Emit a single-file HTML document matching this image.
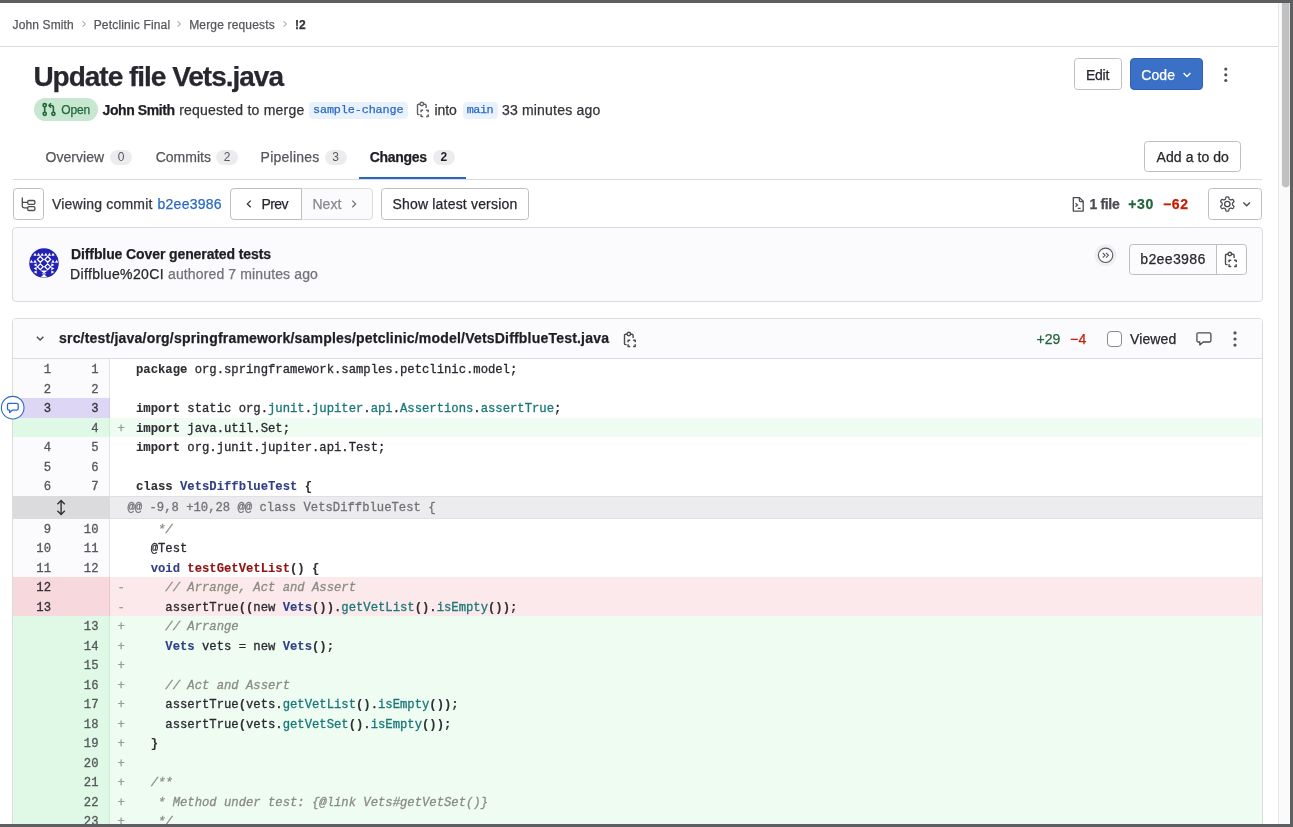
<!DOCTYPE html>
<html lang="en">
<head>
<meta charset="utf-8">
<title>Update file Vets.java (!2) · Merge requests · John Smith / Petclinic Final · GitLab</title>
<style>
*{box-sizing:border-box;margin:0;padding:0}
html,body{width:1293px;height:827px;overflow:hidden;background:#fff}
body{position:relative;font-family:"Liberation Sans",sans-serif;font-size:14px;color:#333238;-webkit-font-smoothing:antialiased}
.abs{position:absolute}
.t{position:absolute;white-space:pre;line-height:1;-webkit-text-stroke:0.250px currentColor}
.mono{font-family:"Liberation Mono",monospace}
.b{font-weight:700}
.hline{position:absolute;height:1px;background:#dcdcde}
.btn{position:absolute;border:1px solid #bfbfc3;border-radius:3.500px;background:#fff}
/* frame */
#ftop{left:0;top:0;width:1293px;height:3px;background:#5e5f61}
#fright{left:1289.5px;top:0;width:3.5px;height:827px;background:#5e5f61}
#fbot{left:0;top:824px;width:1293px;height:3px;background:#5e5f61}
#strack{left:1278px;top:3px;width:11.5px;height:821px;background:#fafafa;border-left:1px solid #e8e8e8}
/* breadcrumb */
.bc{font-size:12px;color:#57565c}
/* tabs */
.tab{font-size:14px;color:#57565c}
.pill{position:absolute;height:15px;border-radius:8px;background:#ececef}
.pill span{position:absolute;left:0;right:0;top:1.500px;text-align:center;font-size:12px;line-height:1;color:#57565c}
/* diff */
#diff{left:13px;top:359px;width:1249px;height:470px;overflow:hidden}
.row{position:absolute;left:0;width:1249px;height:19.5px}
.row .ln{position:absolute;left:0;top:0;width:96.5px;height:100%;background:#fbfafd;border-right:1px solid #e4e4e8}
.row .n1,.row .n2,.row .sg,.row .cd{-webkit-text-stroke:0.300px currentColor;position:absolute;top:5px;font-family:"Liberation Mono",monospace;font-size:12.23px;line-height:1;white-space:pre}
.row .n1{left:0;width:38px;text-align:right;color:#57565c}
.row .n2{left:47px;width:38.500px;text-align:right;color:#57565c}
.row .sg{left:104.5px;color:#9a9a9f}
.row .cd{left:123px;color:#2a2930}
.row.new{background:#eefcf1}
.row.new .ln{background:#e0f9e6;border-right-color:#cdeed5}
.row.old{background:#fbe9eb}
.row.old .ln{background:#f6d8dd;border-right-color:#edc6cc}
.row.hl .ln{background:#ded6f5;border-right-color:#d2c8ee}
.row.hl .n1,.row.hl .n2,.row.old .n1{color:#333238}
.row.hunk .ln{background:#dbdbdd;border-right-color:#dbdbdd}
.row.hunk .hc{position:absolute;left:96.5px;right:0;top:0;height:100%;background:#ececef;border-top:1px solid #e0e0e3;border-bottom:1px solid #e0e0e3}
.row.hunk .cd{top:6.300px;left:114.5px;color:#737278}
.k,.nc,.nf{-webkit-text-stroke:0.100px currentColor}
.k{font-weight:700;color:#2e2e33}
.nc{font-weight:700;color:#303f86}
.nf{font-weight:700;color:#8f1111}
.na{color:#1a7878}
.c{font-style:italic;color:#8c8c84}
/*FIT-START*/
#bc1{letter-spacing:0.12px;left:12.6px !important}
#bc2{letter-spacing:0.172px;left:93.7px !important}
#bc3{letter-spacing:0.162px;left:189.2px !important}
#bc4{letter-spacing:0px;left:295px !important}
#title{letter-spacing:-1.01px;left:33.4px !important}
#bEdit{letter-spacing:-0.201px;left:1085.9px !important}
#bCode{letter-spacing:0.05px;left:1141.3px !important}
#bTodo{letter-spacing:0.07px;left:1156.6px !important}
#open{letter-spacing:-0.167px;left:61.3px !important}
#st1{letter-spacing:-0.422px;left:102.6px !important}
#st2{letter-spacing:0.212px;left:179.2px !important}
#ref1{letter-spacing:-0.125px;left:313.0px !important}
#st3{letter-spacing:-0.166px;left:434.6px !important}
#ref2{letter-spacing:-0.533px;left:466.8px !important}
#st4{letter-spacing:0.199px;left:501.9px !important}
#tb1{letter-spacing:0.014px;left:45.6px !important}
#tb2{letter-spacing:0.0px;left:155.7px !important}
#tb3{letter-spacing:0.239px;left:260.6px !important}
#tb4{letter-spacing:-0.3px;left:369.7px !important}
#vc1{letter-spacing:0.2px;left:52.0px !important}
#vc2{letter-spacing:0.257px;left:157.5px !important}
#bPrev{letter-spacing:-0.567px;left:261.5px !important}
#bNext{letter-spacing:0.0px;left:312.5px !important}
#bShow{letter-spacing:0.183px;left:392.5px !important}
#f1{letter-spacing:-0.34px;left:1089.5px !important}
#f2{letter-spacing:0.6px;left:1128.3px !important}
#f3{letter-spacing:0.6px;left:1163.0px !important}
#cm1{letter-spacing:-0.103px;left:71.0px !important}
#cm2{letter-spacing:0.358px;left:70.0px !important}
#cm3{letter-spacing:0.133px;left:168.0px !important}
#sha{letter-spacing:-0.229px;left:1140.0px !important}
#fp{letter-spacing:0.201px;left:59.0px !important}
#fa{letter-spacing:0.0px;left:1036.5px !important}
#fd{letter-spacing:0.4px;left:1070px !important}
#vw{letter-spacing:0.1px;left:1130px !important}
/*FIT-END*/
</style>
</head>
<body>
<div id="wrap" style="position:absolute;left:0;top:0;width:1293px;height:827px;will-change:transform">
<!-- window frame + scrollbar -->
<div class="abs" id="strack"></div>
<svg class="abs" style="left:1279px;top:0" width="11" height="200"><rect x="2.900" y="-4" width="7.600" height="191.400" rx="3.800" fill="#c1c1c1"/></svg>

<!-- breadcrumb -->
<div class="hline" style="left:0;top:46px;width:1278px"></div>

<span class="t bc" id="bc1" style="left:13px;top:18.800px">John Smith</span>
<svg class="abs" style="left:80px;top:20px" width="8" height="8" viewBox="0 0 8 8"><path d="M2.6 1.2 5.4 4 2.6 6.8" fill="none" stroke="#89888d" stroke-width="1"/></svg>
<span class="t bc" id="bc2" style="left:94px;top:18.800px">Petclinic Final</span>
<svg class="abs" style="left:175px;top:20px" width="8" height="8" viewBox="0 0 8 8"><path d="M2.6 1.2 5.4 4 2.6 6.8" fill="none" stroke="#89888d" stroke-width="1"/></svg>
<span class="t bc" id="bc3" style="left:189px;top:18.800px">Merge requests</span>
<svg class="abs" style="left:281px;top:20px" width="8" height="8" viewBox="0 0 8 8"><path d="M2.6 1.2 5.4 4 2.6 6.8" fill="none" stroke="#89888d" stroke-width="1"/></svg>
<span class="t bc b" id="bc4" style="left:295px;top:18.800px;color:#333238">!2</span>

<!-- title -->
<h1 class="t b" id="title" style="left:34px;top:63.300px;font-size:28px;color:#28272d">Update file Vets.java</h1>

<!-- title buttons -->
<div class="btn" style="left:1074px;top:58px;width:48px;height:32px"></div>
<span class="t" id="bEdit" style="left:1086px;top:68px;color:#28272d">Edit</span>
<div class="abs" style="left:1130px;top:58px;width:73px;height:32px;border-radius:4px;background:#3a70c5;border:1px solid #2f62b4"></div>
<span class="t" id="bCode" style="left:1141px;top:68px;color:#fff">Code</span>
<svg class="abs" style="left:1182px;top:71px" width="10" height="8" viewBox="0 0 10 8"><path d="M1.6 2 5 5.4 8.4 2" fill="none" stroke="#fff" stroke-width="1.4"/></svg>
<svg class="abs" style="left:1222px;top:65.600px" width="8" height="18" viewBox="0 0 8 18"><circle cx="3.8" cy="3.1" r="1.600" fill="#535258"/><circle cx="3.8" cy="8.8" r="1.600" fill="#535258"/><circle cx="3.8" cy="14.5" r="1.600" fill="#535258"/></svg>

<!-- status row -->
<div class="abs" style="left:34px;top:98.300px;width:64px;height:23px;border-radius:12px;background:#c7e7d0"></div>
<svg class="abs" style="left:41px;top:102px" width="16" height="16" viewBox="0 0 16 16" fill="none" stroke="#24663b" stroke-width="1.600"><circle cx="3.7" cy="3.2" r="1.6"/><circle cx="3.7" cy="11.8" r="1.6"/><circle cx="12.4" cy="11.8" r="1.6"/><path d="M3.7 4.8v5.4M12.4 10.2V5.4c0-1.2-.7-1.9-1.9-1.9H8.6"/><path d="M10 1.3 7.9 3.5 10 5.7" stroke-linejoin="round"/></svg>
<span class="t" id="open" style="left:61px;top:104px;font-size:12px;color:#24663b">Open</span>
<span class="t b" id="st1" style="left:102px;top:103px;color:#1f1e24">John Smith</span>
<span class="t" id="st2" style="left:179.5px;top:103px">requested to merge</span>
<div class="abs" style="left:309px;top:102px;width:98.5px;height:17px;border-radius:4px;background:#e9f2fc"></div>
<span class="t mono" id="ref1" style="left:313.5px;top:104.5px;font-size:11.8px;color:#2a6ac6">sample-change</span>
<svg class="abs" style="left:416px;top:101px" width="14" height="17" viewBox="0 0 14 17" fill="none" stroke="#626168" stroke-width="1.400"><path d="M3.900 3.300H2.700c-.8 0-1.200.4-1.200 1.200v7.900c0 .8.400 1.200 1.200 1.200h.9M7.700 3.300h1.200c.8 0 1.200.400 1.200 1.200v2.500"/><circle cx="5.800" cy="3" r="1.750"/><path d="M5.100 11.300V9.200h2.100M10.100 9.200h2.100v2.100M12.200 13.300v2.100h-2.100M7.200 15.400H5.100v-2.100" stroke-width="1.500" stroke-linejoin="round"/></svg>
<span class="t" id="st3" style="left:434.5px;top:103px">into</span>
<div class="abs" style="left:463px;top:102px;width:34.5px;height:17px;border-radius:4px;background:#e9f2fc"></div>
<span class="t mono" id="ref2" style="left:467px;top:104.5px;font-size:11.8px;color:#2a6ac6">main</span>
<span class="t" id="st4" style="left:501.5px;top:103px">33 minutes ago</span>

<!-- tabs -->
<span class="t tab" id="tb1" style="left:45.5px;top:149.500px">Overview</span>
<div class="pill" style="left:110px;top:149.5px;width:22px"><span>0</span></div>
<span class="t tab" id="tb2" style="left:156px;top:149.500px">Commits</span>
<div class="pill" style="left:216px;top:149.5px;width:22px"><span>2</span></div>
<span class="t tab" id="tb3" style="left:261.5px;top:149.500px">Pipelines</span>
<div class="pill" style="left:324.5px;top:149.5px;width:22px"><span>3</span></div>
<span class="t tab b" id="tb4" style="left:370px;top:149.500px;color:#1f1e24">Changes</span>
<div class="pill" style="left:433px;top:149.5px;width:21.5px"><span class="b" style="color:#1f1e24">2</span></div>
<div class="abs" style="left:358.500px;top:177.200px;width:107.500px;height:2.300px;background:#2a66c4"></div>
<div class="hline" style="left:13px;top:179px;width:1249px"></div>
<div class="btn" style="left:1144px;top:141px;width:97px;height:31px"></div>
<span class="t" id="bTodo" style="left:1156px;top:150px;color:#28272d">Add a to do</span>

<!-- toolbar -->
<div class="btn" style="left:13px;top:188px;width:31px;height:32px"></div>
<svg class="abs" style="left:20px;top:196px" width="17" height="16" viewBox="0 0 17 16" fill="none" stroke="#4c4b51" stroke-width="1.3"><path d="M2.300 1.400v8.700c0 1.200.6 1.800 1.800 1.800h3.400M2.300 6.400h5.200"/><rect x="7.700" y="4.500" width="7.200" height="3.800" rx="1.300"/><rect x="7.700" y="10.600" width="7.200" height="3.900" rx="1.300"/></svg>
<span class="t" id="vc1" style="left:52px;top:197px">Viewing commit</span>
<span class="t" id="vc2" style="left:157.500px;top:197px;color:#2a6ac6">b2ee3986</span>
<div class="abs" style="left:301px;top:188px;width:72px;height:32px;border:1px solid #dcdcde;border-radius:0 4px 4px 0;background:#fbfafd"></div>
<div class="btn" style="left:230px;top:188px;width:72px;height:32px;border-radius:4px 0 0 4px"></div>
<svg class="abs" style="left:245px;top:199px" width="8" height="10" viewBox="0 0 8 10"><path d="M5.700 1.600 2.400 4.900l3.300 3.300" fill="none" stroke="#333238" stroke-width="1.300"/></svg>
<span class="t" id="bPrev" style="left:261.500px;top:197px;color:#28272d">Prev</span>
<span class="t" id="bNext" style="left:312.500px;top:197px;color:#89888d">Next</span>
<svg class="abs" style="left:350px;top:199px" width="8" height="10" viewBox="0 0 8 10"><path d="M2.300 1.600 5.600 4.900 2.300 8.200" fill="none" stroke="#737278" stroke-width="1.300"/></svg>
<div class="btn" style="left:381px;top:188px;width:148px;height:32px"></div>
<span class="t" id="bShow" style="left:392.500px;top:197px;color:#28272d">Show latest version</span>

<svg class="abs" style="left:1071px;top:196px" width="14" height="17" viewBox="0 0 14 17" fill="none" stroke="#4c4b51" stroke-width="1.300"><path d="M2.300 1.600h6.200l3.700 3.700v9.800H2.300z" stroke-linejoin="round"/><path d="M8.300 1.800v2.400c0 .9.500 1.400 1.400 1.400h2.300" stroke-width="1.200"/><path d="M4.500 7.200 6.600 9 4.500 10.800M6.800 12.400h2.800" stroke-width="1.200"/></svg>
<span class="t b" id="f1" style="left:1089.500px;top:197px;color:#4c4b51">1 file</span>
<span class="t b" id="f2" style="left:1128.500px;top:197px;color:#24663b">+30</span>
<span class="t b" id="f3" style="left:1163px;top:197px;color:#c91c00">−62</span>
<div class="btn" style="left:1208px;top:188px;width:54px;height:32px"></div>
<svg class="abs" style="left:1219px;top:195px" width="17" height="18" viewBox="0 0 17 18" fill="none" stroke="#4c4b51" stroke-width="1.300"><circle cx="8.3" cy="9.0" r="2.700"/><path d="M13.45 9.00 L13.44 8.64 L13.40 8.28 L13.74 7.84 L14.40 7.25 L14.97 6.57 L14.83 6.09 L14.61 5.64 L14.36 5.21 L14.08 4.80 L13.74 4.44 L12.87 4.59 L12.02 4.87 L11.47 4.94 L11.18 4.73 L10.88 4.54 L10.56 4.37 L10.23 4.23 L10.02 3.71 L9.84 2.84 L9.53 2.01 L9.05 1.89 L8.55 1.85 L8.05 1.85 L7.55 1.89 L7.07 2.01 L6.76 2.84 L6.58 3.71 L6.37 4.23 L6.04 4.37 L5.73 4.54 L5.42 4.73 L5.13 4.94 L4.58 4.87 L3.73 4.59 L2.86 4.44 L2.52 4.80 L2.24 5.21 L1.99 5.64 L1.77 6.09 L1.63 6.57 L2.20 7.25 L2.86 7.84 L3.20 8.28 L3.16 8.64 L3.15 9.00 L3.16 9.36 L3.20 9.72 L2.86 10.16 L2.20 10.75 L1.63 11.43 L1.77 11.91 L1.99 12.36 L2.24 12.79 L2.52 13.20 L2.86 13.56 L3.73 13.41 L4.58 13.13 L5.13 13.06 L5.42 13.27 L5.72 13.46 L6.04 13.63 L6.37 13.77 L6.58 14.29 L6.76 15.16 L7.07 15.99 L7.55 16.11 L8.05 16.15 L8.55 16.15 L9.05 16.11 L9.53 15.99 L9.84 15.16 L10.02 14.29 L10.23 13.77 L10.56 13.63 L10.88 13.46 L11.18 13.27 L11.47 13.06 L12.02 13.13 L12.87 13.41 L13.74 13.56 L14.08 13.20 L14.36 12.79 L14.61 12.36 L14.83 11.91 L14.97 11.43 L14.40 10.75 L13.74 10.16 L13.40 9.72 L13.44 9.36z" stroke-linejoin="round"/></svg>
<svg class="abs" style="left:1242px;top:200px" width="10" height="8" viewBox="0 0 10 8"><path d="M1.400 2.400 4.700 5.700 8 2.400" fill="none" stroke="#4c4b51" stroke-width="1.400"/></svg>

<!-- commit box -->
<div class="abs" style="left:12px;top:227px;width:1251px;height:75px;border:1px solid #dcdcde;border-radius:4px;background:#fbfafd"></div>
<svg class="abs" style="left:28.500px;top:248px" width="30" height="30" viewBox="0 0 30 30"><defs><clipPath id="avc"><circle cx="15" cy="15" r="14.800"/></clipPath></defs><circle cx="15" cy="15" r="14.800" fill="#2222b4"/><g clip-path="url(#avc)" fill="#fff"><path d="M4.300 7.800 6 4.700 7.700 7.800zM7.900 7.800 9.600 4.700 11.300 7.800zM11.500 7.800 13.200 4.700 14.900 7.800zM15.100 7.800 16.800 4.700 18.500 7.800zM18.700 7.800 20.400 4.700 22.100 7.800zM22.300 7.800 24 4.700 25.700 7.800z"/><path d="M0.700 14.800 2.400 11.700 4.100 14.800zM4.300 14.800 6 11.700 7.700 14.800zM22.300 14.800 24 11.700 25.700 14.800zM25.900 14.800 27.600 11.700 29.300 14.800z"/><path d="M7.700 15.200 4.600 16.900 7.700 18.600zM7.700 18.800 4.600 20.500 7.700 22.200zM7.700 22.400 4.600 24.100 7.700 25.800zM22.300 15.200 25.400 16.900 22.300 18.600zM22.300 18.800 25.400 20.500 22.300 22.200zM22.300 22.400 25.400 24.100 22.300 25.800z"/><path d="M11.300 22.600h7.400L15 25.300zM11.300 29.600h7.400L15 26.300zM13 25.400h4v.9h-4z"/><g fill="none" stroke="#fff" stroke-width="1.300"><path d="M11.300 8.500 14.200 11.400 11.300 14.300 8.400 11.400zM18.700 8.500 21.600 11.400 18.700 14.300 15.800 11.400zM11.300 15.900 14.200 18.800 11.300 21.700 8.400 18.800zM18.700 15.900 21.600 18.800 18.700 21.700 15.800 18.800z"/></g></g></svg>
<span class="t b" id="cm1" style="left:71px;top:247px;color:#1f1e24">Diffblue Cover generated tests</span>
<span class="t" id="cm2" style="left:71px;top:267px;color:#28272d">Diffblue%20CI</span>
<span class="t" id="cm3" style="left:168px;top:267px;color:#737278">authored 7 minutes ago</span>
<svg class="abs" style="left:1093px;top:243px" width="26" height="26" viewBox="0 0 26 26" fill="none" stroke="#57565c"><circle cx="12.600" cy="12.300" r="10.900" fill="#efeef2" stroke="none"/><circle cx="12.600" cy="12.300" r="7.200" stroke-width="1.100" fill="#fbfafd"/><path d="M9.700 9.900 12.100 12.300 9.700 14.700M13 9.900l2.400 2.400-2.400 2.400" stroke-width="1.100"/></svg>
<div class="btn" style="left:1129px;top:244px;width:117.500px;height:30.500px;background:#fbfafd"></div>
<div class="abs" style="left:1217px;top:245px;width:28px;height:29px;background:#fff;border-radius:0 3px 3px 0"></div><div class="abs" style="left:1216px;top:244px;width:1px;height:30.500px;background:#bfbfc3"></div>
<span class="t mono" id="sha" style="left:1140px;top:252.700px;font-size:14px;color:#28272d">b2ee3986</span>
<svg class="abs" style="left:1224px;top:250.500px" width="14" height="17" viewBox="0 0 14 17" fill="none" stroke="#4c4b51" stroke-width="1.400"><path d="M3.900 3.300H2.700c-.8 0-1.200.4-1.200 1.200v7.900c0 .8.400 1.200 1.200 1.200h.9M7.700 3.300h1.200c.8 0 1.200.400 1.200 1.200v2.500"/><circle cx="5.800" cy="3" r="1.750"/><path d="M5.100 11.300V9.200h2.100M10.100 9.200h2.100v2.100M12.200 13.300v2.100h-2.100M7.200 15.400H5.100v-2.100" stroke-width="1.500" stroke-linejoin="round"/></svg>

<!-- file box -->
<div class="abs" style="left:12px;top:318px;width:1251px;height:520px;border:1px solid #dcdcde;border-radius:4px 4px 0 0;background:#fff"></div>
<div class="abs" style="left:13px;top:319px;width:1249px;height:40px;border-radius:3px 3px 0 0;background:#fbfafd;border-bottom:1px solid #dcdcde"></div>
<svg class="abs" style="left:35px;top:334px" width="10" height="8" viewBox="0 0 10 8"><path d="M1.800 2.700 5.100 6 8.400 2.700" fill="none" stroke="#4c4b51" stroke-width="1.400"/></svg>
<span class="t b" id="fp" style="left:59px;top:331px;color:#1f1e24">src/test/java/org/springframework/samples/petclinic/model/VetsDiffblueTest.java</span>
<svg class="abs" style="left:622.500px;top:330.500px" width="14" height="17" viewBox="0 0 14 17" fill="none" stroke="#4c4b51" stroke-width="1.400"><path d="M3.900 3.300H2.700c-.8 0-1.200.4-1.200 1.200v7.900c0 .8.400 1.200 1.200 1.200h.9M7.700 3.300h1.200c.8 0 1.200.400 1.200 1.200v2.500"/><circle cx="5.800" cy="3" r="1.750"/><path d="M5.100 11.300V9.200h2.100M10.100 9.200h2.100v2.100M12.200 13.300v2.100h-2.100M7.200 15.400H5.100v-2.100" stroke-width="1.500" stroke-linejoin="round"/></svg>
<span class="t" id="fa" style="left:1036.500px;top:331.500px;color:#24663b">+29</span>
<span class="t" id="fd" style="left:1070px;top:331.500px;color:#c91c00">−4</span>
<div class="abs" style="left:1106.500px;top:331px;width:15.500px;height:15.500px;border:1px solid #89888d;border-radius:4px;background:#fff"></div>
<span class="t" id="vw" style="left:1130px;top:331.500px;color:#28272d">Viewed</span>
<svg class="abs" style="left:1195px;top:331px" width="18" height="16" viewBox="0 0 18 16" fill="none" stroke="#4c4b51" stroke-width="1.300"><path d="M3.300 1.800h11.200c.9 0 1.400.5 1.400 1.400v6.400c0 .9-.5 1.400-1.400 1.400H8.200l-3.400 2.900V11H3.300c-.9 0-1.400-.5-1.400-1.400V3.200c0-.9.500-1.400 1.400-1.400z" stroke-linejoin="round"/></svg>
<svg class="abs" style="left:1231px;top:330px" width="8" height="18" viewBox="0 0 8 18"><circle cx="4" cy="2.900" r="1.600" fill="#535258"/><circle cx="4" cy="9" r="1.600" fill="#535258"/><circle cx="4" cy="15.100" r="1.600" fill="#535258"/></svg>

<!-- DIFF-START -->
<div class="abs" id="diff">
<div class="row" style="top:0px"><div class="ln"></div><span class="n1">1</span><span class="n2">1</span><span class="cd" id="r0"><span class="k">package</span> org.springframework.samples.petclinic.model;</span></div>
<div class="row" style="top:19.5px"><div class="ln"></div><span class="n1">2</span><span class="n2">2</span></div>
<div class="row hl" style="top:39px"><div class="ln"></div><span class="n1">3</span><span class="n2">3</span><span class="cd" id="r2"><span class="k">import</span> static org.<span class="na">junit</span>.<span class="na">jupiter</span>.<span class="na">api</span>.<span class="na">Assertions</span>.<span class="na">assertTrue</span>;</span></div>
<div class="row new" style="top:58.5px"><div class="ln"></div><span class="n2">4</span><span class="sg">+</span><span class="cd" id="r3"><span class="k">import</span> java.util.Set;</span></div>
<div class="row" style="top:78px"><div class="ln"></div><span class="n1">4</span><span class="n2">5</span><span class="cd" id="r4"><span class="k">import</span> org.junit.jupiter.api.Test;</span></div>
<div class="row" style="top:97.5px"><div class="ln"></div><span class="n1">5</span><span class="n2">6</span></div>
<div class="row" style="top:117px"><div class="ln"></div><span class="n1">6</span><span class="n2">7</span><span class="cd" id="r6"><span class="k">class</span> <span class="nc">VetsDiffblueTest</span> <span class="k">{</span></span></div>
<div class="row hunk" style="top:136.5px;height:23px"><div class="ln"></div><div class="hc"></div><svg class="abs" style="left:42px;top:3.100px" width="12" height="17" viewBox="0 0 12 17" fill="none" stroke="#333238" stroke-width="1.4"><path d="M6.1 1.700v13.600M2.400 5.200 6.100 1.500 9.800 5.200M2.400 11.800 6.100 15.500 9.800 11.800"/></svg><span class="cd" id="hk">@@ -9,8 +10,28 @@ class VetsDiffblueTest {</span></div>
<div class="row" style="top:159.5px"><div class="ln"></div><span class="n1">9</span><span class="n2">10</span><span class="cd" id="r8">   <span class="c">*/</span></span></div>
<div class="row" style="top:179px"><div class="ln"></div><span class="n1">10</span><span class="n2">11</span><span class="cd" id="r9">  @Test</span></div>
<div class="row" style="top:198.5px"><div class="ln"></div><span class="n1">11</span><span class="n2">12</span><span class="cd" id="r10">  <span class="nc">void</span> <span class="nf">testGetVetList</span><span class="k">()</span> <span class="k">{</span></span></div>
<div class="row old" style="top:218px"><div class="ln"></div><span class="n1">12</span><span class="sg">-</span><span class="cd" id="r11">    <span class="c">// Arrange, Act and Assert</span></span></div>
<div class="row old" style="top:237.5px"><div class="ln"></div><span class="n1">13</span><span class="sg">-</span><span class="cd" id="r12">    assertTrue<span class="k">((</span>new <span class="nc">Vets</span><span class="k">())</span>.<span class="na">getVetList</span><span class="k">()</span>.<span class="na">isEmpty</span><span class="k">());</span></span></div>
<div class="row new" style="top:257px"><div class="ln"></div><span class="n2">13</span><span class="sg">+</span><span class="cd" id="r13">    <span class="c">// Arrange</span></span></div>
<div class="row new" style="top:276.5px"><div class="ln"></div><span class="n2">14</span><span class="sg">+</span><span class="cd" id="r14">    <span class="nc">Vets</span> vets = new <span class="nc">Vets</span><span class="k">();</span></span></div>
<div class="row new" style="top:296px"><div class="ln"></div><span class="n2">15</span><span class="sg">+</span></div>
<div class="row new" style="top:315.5px"><div class="ln"></div><span class="n2">16</span><span class="sg">+</span><span class="cd" id="r16">    <span class="c">// Act and Assert</span></span></div>
<div class="row new" style="top:335px"><div class="ln"></div><span class="n2">17</span><span class="sg">+</span><span class="cd" id="r17">    assertTrue<span class="k">(</span>vets.<span class="na">getVetList</span><span class="k">()</span>.<span class="na">isEmpty</span><span class="k">());</span></span></div>
<div class="row new" style="top:354.5px"><div class="ln"></div><span class="n2">18</span><span class="sg">+</span><span class="cd" id="r18">    assertTrue<span class="k">(</span>vets.<span class="na">getVetSet</span><span class="k">()</span>.<span class="na">isEmpty</span><span class="k">());</span></span></div>
<div class="row new" style="top:374px"><div class="ln"></div><span class="n2">19</span><span class="sg">+</span><span class="cd" id="r19">  <span class="k">}</span></span></div>
<div class="row new" style="top:393.5px"><div class="ln"></div><span class="n2">20</span><span class="sg">+</span></div>
<div class="row new" style="top:413px"><div class="ln"></div><span class="n2">21</span><span class="sg">+</span><span class="cd" id="r21">  <span class="c">/**</span></span></div>
<div class="row new" style="top:432.5px"><div class="ln"></div><span class="n2">22</span><span class="sg">+</span><span class="cd" id="r22">   <span class="c">* Method under test: {@link Vets#getVetSet()}</span></span></div>
<div class="row new" style="top:452px"><div class="ln"></div><span class="n2">23</span><span class="sg">+</span><span class="cd" id="r23">   <span class="c">*/</span></span></div>
</div>
<!-- DIFF-END -->
<svg class="abs" style="left:0;top:395px" width="26" height="26" viewBox="0 0 26 26" fill="none"><circle cx="12.700" cy="12.700" r="11.300" fill="#fff" stroke="#2a6ac6" stroke-width="1.100"/><path d="M8.900 8.300h7.900c.9 0 1.400.5 1.400 1.400v4.100c0 .9-.5 1.400-1.400 1.400h-4.500l-2.700 2.400v-2.400h-.7c-.9 0-1.400-.5-1.400-1.400V9.700c0-.9.500-1.400 1.400-1.400z" stroke="#2a6ac6" stroke-width="1.300" stroke-linejoin="round"/></svg>

<div class="abs" id="ftop"></div>
<div class="abs" id="fright"></div>
<div class="abs" id="fbot"></div>
</div>
</body>
</html>
